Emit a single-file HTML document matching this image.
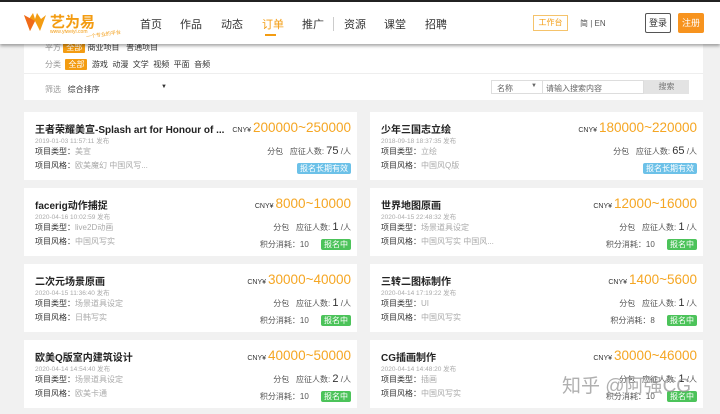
<!DOCTYPE html>
<html><head><meta charset="utf-8"><style>
*{margin:0;padding:0;box-sizing:border-box}
body{width:720px;height:414px;overflow:hidden;background:#f1f1f1;font-family:"Liberation Sans","Noto Sans CJK SC",sans-serif;position:relative;color:#333}
.topline{position:absolute;left:0;top:0;width:720px;height:2px;background:#222}
.hdr{position:absolute;left:0;top:2px;width:720px;height:42px;background:#fff;box-shadow:0 2px 3px rgba(0,0,0,.35);z-index:5}
.abs{position:absolute;white-space:nowrap}
.nav{font-size:11px;color:#333;top:14px}
.panel{position:absolute;left:24px;top:44px;width:679px;height:56px;background:#fff}
.f{font-size:8px;color:#333}
.lab{color:#999}
.tag{background:#f39c12;color:#fff;padding:1px 3px;border-radius:1px}
.card{position:absolute;width:333px;height:68px;background:#fff}
.t{left:11px;top:9px;font-size:10px;font-weight:bold;color:#222}
.d{left:11px;top:23px;font-size:6.5px;color:#aaa}
.r1{left:11px;top:34px;font-size:8px;color:#333}
.r2{left:11px;top:48px;font-size:8px;color:#333}
.g{color:#aaa}
.price{right:6px;top:8px;font-size:13.5px;color:#f5a623}
.price small{font-size:7px;color:#333;margin-right:2px}
.m1{right:6px;top:33px;font-size:8px;color:#555}
.m1 b{font-size:11px;font-weight:normal;color:#333}
.m2{right:6px;top:51px;font-size:8px;color:#555}
.bd{color:#fff;font-size:8px;padding:1px 3px;border-radius:2px;margin-left:10px}
.blue{background:#6cc1e8}.green{background:#4cc35a}
</style></head><body>
<div class="topline"></div>
<div class="hdr">
 <svg class="abs" style="left:24px;top:11px" width="22" height="20" viewBox="0 0 22 20"><path d="M0 2 L6 18 L11 8 L16 18 L22 2 L17 6 L13 0 L11 6 L9 0 L5 6Z" fill="#f39c12"/><path d="M0 2 L6 18 L11 8Z" fill="#f06a1a"/></svg>
 <div class="abs" style="left:50px;top:9px;font-size:15px;font-weight:bold;color:#f39c12">艺为易</div>
 <div class="abs" style="left:50px;top:27px;font-size:5px;color:#f39c12">www.yiweiyi.com</div>
 <div class="abs" style="left:86px;top:29px;font-size:5px;color:#f39c12;transform:rotate(-8deg)">一个专业的平台</div>
 <div class="abs nav" style="left:140px">首页</div>
 <div class="abs nav" style="left:180px">作品</div>
 <div class="abs nav" style="left:221px">动态</div>
 <div class="abs nav" style="left:262px;color:#f39c12">订单</div>
 <div class="abs" style="left:265px;top:32px;width:11px;height:2px;background:#f39c12"></div>
 <div class="abs nav" style="left:302px">推广</div>
 <div class="abs" style="left:333px;top:15px;width:1px;height:14px;background:#ccc"></div>
 <div class="abs nav" style="left:344px">资源</div>
 <div class="abs nav" style="left:384px">课堂</div>
 <div class="abs nav" style="left:425px">招聘</div>
 <div class="abs" style="left:533px;top:13px;width:35px;height:16px;border:1px solid #f5c36b;color:#f39c12;font-size:8px;text-align:center;line-height:14px">工作台</div>
 <div class="abs" style="left:580px;top:16px;font-size:8px;color:#555">简 | EN</div>
 <div class="abs" style="left:645px;top:11px;width:26px;height:20px;border:1px solid #555;border-radius:2px;font-size:9px;text-align:center;line-height:18px">登录</div>
 <div class="abs" style="left:678px;top:11px;width:26px;height:20px;background:#f7931e;border-radius:2px;color:#fff;font-size:9px;text-align:center;line-height:20px">注册</div>
</div>
<div class="panel">
 <div class="abs f" style="left:21px;top:-2px"><span class="lab">平方</span> <span class="tag">全部</span> 商业项目 &nbsp; 普通项目</div>
 <div class="abs f" style="left:21px;top:15px"><span class="lab">分类</span>&nbsp; <span class="tag">全部</span>&nbsp; 游戏 &nbsp;动漫 &nbsp;文学 &nbsp;视频 &nbsp;平面 &nbsp;音频</div>
 <div class="abs" style="left:0;top:29px;width:679px;height:1px;background:#eee"></div>
 <div class="abs f" style="left:21px;top:40px"><span class="lab">筛选</span> &nbsp; 综合排序</div>
 <div class="abs f" style="left:137px;top:40px;font-size:6px">▼</div>
 <div class="abs" style="left:467px;top:36px;width:52px;height:14px;border:1px solid #ddd;font-size:8px;color:#666;padding:2px 5px">名称<span style="float:right;font-size:6px">▼</span></div>
 <div class="abs" style="left:518px;top:36px;width:102px;height:14px;border:1px solid #ddd;font-size:8px;color:#666;padding:2px 3px">请输入搜索内容</div>
 <div class="abs" style="left:620px;top:36px;width:45px;height:14px;background:#e3e3e3;font-size:8px;color:#777;text-align:center;line-height:14px">搜索</div>
</div>

<div class="card" style="left:24px;top:112px">
 <div class="abs t">王者荣耀美宣-Splash art for Honour of ...</div><div class="abs d">2019-01-03 11:57:11 发布</div>
 <div class="abs r1">项目类型：<span class="g">美宣</span></div><div class="abs r2">项目风格：<span class="g">欧美魔幻 中国风写...</span></div>
 <div class="abs price"><small>CNY¥</small>200000~250000</div>
 <div class="abs m1">分包 &nbsp; 应征人数: <b>75</b> /人</div>
 <div class="abs m2"><span class="bd blue">报名长期有效</span></div>
</div>
<div class="card" style="left:370px;top:112px">
 <div class="abs t">少年三国志立绘</div><div class="abs d">2018-09-18 18:37:35 发布</div>
 <div class="abs r1">项目类型：<span class="g">立绘</span></div><div class="abs r2">项目风格：<span class="g">中国风Q版</span></div>
 <div class="abs price"><small>CNY¥</small>180000~220000</div>
 <div class="abs m1">分包 &nbsp; 应征人数: <b>65</b> /人</div>
 <div class="abs m2"><span class="bd blue">报名长期有效</span></div>
</div>
<div class="card" style="left:24px;top:188px">
 <div class="abs t">facerig动作捕捉</div><div class="abs d">2020-04-16 10:02:59 发布</div>
 <div class="abs r1">项目类型：<span class="g">live2D动画</span></div><div class="abs r2">项目风格：<span class="g">中国风写实</span></div>
 <div class="abs price"><small>CNY¥</small>8000~10000</div>
 <div class="abs m1">分包 &nbsp; 应征人数: <b>1</b> /人</div>
 <div class="abs m2">积分消耗：10 <span class="bd green">报名中</span></div>
</div>
<div class="card" style="left:370px;top:188px">
 <div class="abs t">世界地图原画</div><div class="abs d">2020-04-15 22:48:32 发布</div>
 <div class="abs r1">项目类型：<span class="g">场景道具设定</span></div><div class="abs r2">项目风格：<span class="g">中国风写实 中国风...</span></div>
 <div class="abs price"><small>CNY¥</small>12000~16000</div>
 <div class="abs m1">分包 &nbsp; 应征人数: <b>1</b> /人</div>
 <div class="abs m2">积分消耗：10 <span class="bd green">报名中</span></div>
</div>
<div class="card" style="left:24px;top:264px">
 <div class="abs t">二次元场景原画</div><div class="abs d">2020-04-15 11:36:40 发布</div>
 <div class="abs r1">项目类型：<span class="g">场景道具设定</span></div><div class="abs r2">项目风格：<span class="g">日韩写实</span></div>
 <div class="abs price"><small>CNY¥</small>30000~40000</div>
 <div class="abs m1">分包 &nbsp; 应征人数: <b>1</b> /人</div>
 <div class="abs m2">积分消耗：10 <span class="bd green">报名中</span></div>
</div>
<div class="card" style="left:370px;top:264px">
 <div class="abs t">三转二图标制作</div><div class="abs d">2020-04-14 17:19:22 发布</div>
 <div class="abs r1">项目类型：<span class="g">UI</span></div><div class="abs r2">项目风格：<span class="g">中国风写实</span></div>
 <div class="abs price"><small>CNY¥</small>1400~5600</div>
 <div class="abs m1">分包 &nbsp; 应征人数: <b>1</b> /人</div>
 <div class="abs m2">积分消耗：8 <span class="bd green">报名中</span></div>
</div>
<div class="card" style="left:24px;top:340px">
 <div class="abs t">欧美Q版室内建筑设计</div><div class="abs d">2020-04-14 14:54:40 发布</div>
 <div class="abs r1">项目类型：<span class="g">场景道具设定</span></div><div class="abs r2">项目风格：<span class="g">欧美卡通</span></div>
 <div class="abs price"><small>CNY¥</small>40000~50000</div>
 <div class="abs m1">分包 &nbsp; 应征人数: <b>2</b> /人</div>
 <div class="abs m2">积分消耗：10 <span class="bd green">报名中</span></div>
</div>
<div class="card" style="left:370px;top:340px">
 <div class="abs t">CG插画制作</div><div class="abs d">2020-04-14 14:48:20 发布</div>
 <div class="abs r1">项目类型：<span class="g">插画</span></div><div class="abs r2">项目风格：<span class="g">中国风写实</span></div>
 <div class="abs price"><small>CNY¥</small>30000~46000</div>
 <div class="abs m1">分包 &nbsp; 应征人数: <b>1</b> /人</div>
 <div class="abs m2">积分消耗：10 <span class="bd green">报名中</span></div>
</div>
<div class="abs" style="left:562px;top:371px;font-size:19px;color:rgba(150,150,150,.75)">知乎 @阿强CG</div>
</body></html>
